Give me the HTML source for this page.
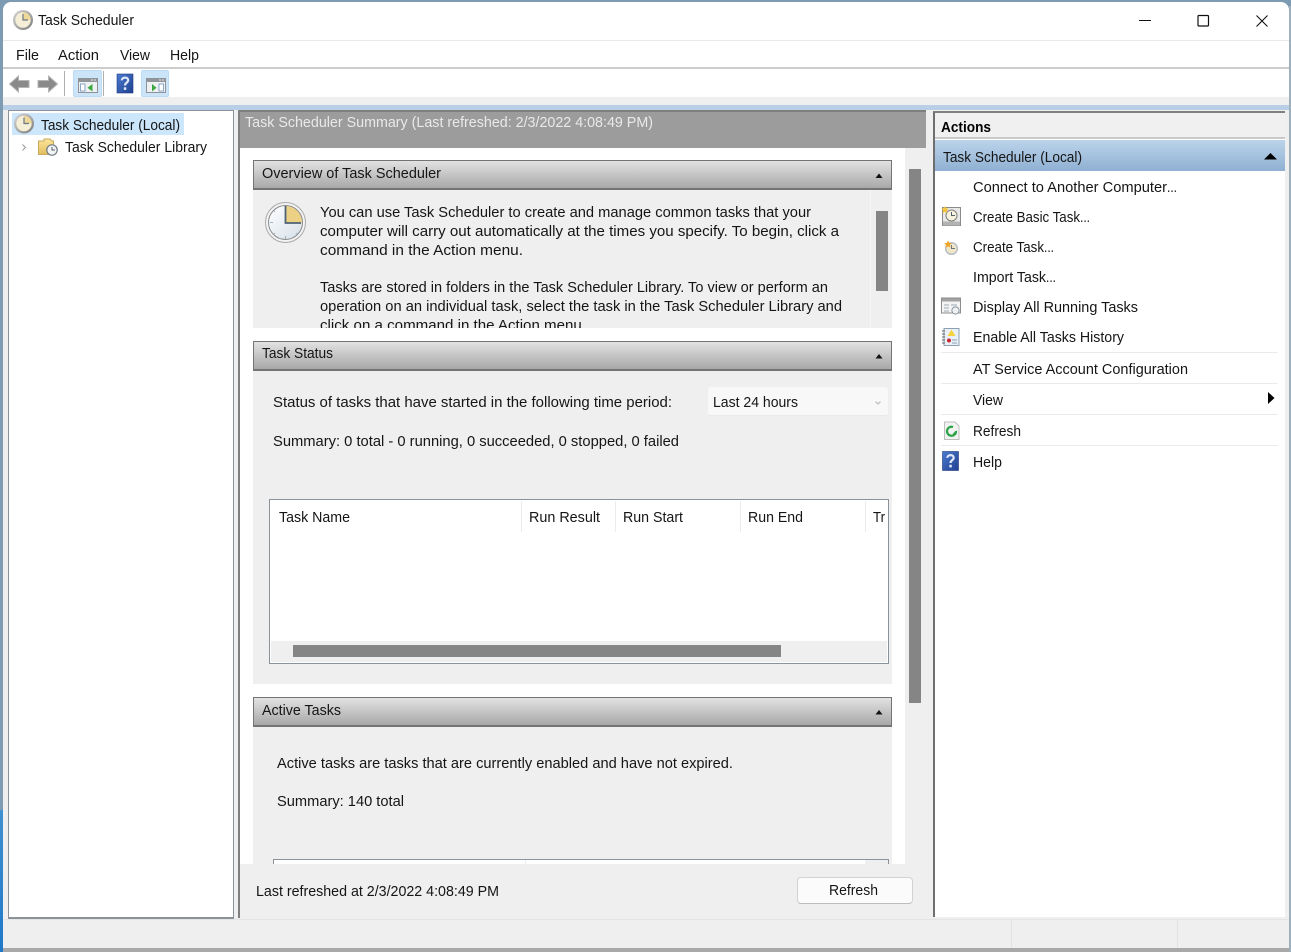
<!DOCTYPE html>
<html><head><meta charset="utf-8"><title>Task Scheduler</title>
<style>
html,body{margin:0;padding:0;width:1291px;height:952px;overflow:hidden;background:#7d9cb3}
body{filter:blur(.3px)}
.b{position:absolute;box-sizing:border-box}
.h{position:absolute;box-sizing:border-box;left:253px;width:639px;height:30px;border:2px solid #747474;border-width:1.5px 1.5px 2px 1.5px;background:linear-gradient(#e2e2e2,#a8a8a8)}
svg{position:absolute;left:0;top:0}
text{font-family:"Liberation Sans",sans-serif;font-size:15px;fill:#151515}
</style></head><body>
<div class="b" style="left:0;top:810px;width:8px;height:142px;background:linear-gradient(#3f90d0,#1f78c8)"></div>
<div class="b" style="left:3px;top:2px;width:1286px;height:946px;background:#fff;border-radius:8px 8px 0 0"></div>
<div class="b" style="left:3px;top:948px;width:1288px;height:4px;background:#a9a9a9"></div>
<div class="b" style="left:1289px;top:6px;width:2px;height:946px;background:#9fb0bd"></div>
<div class="b" style="left:3px;top:40px;width:1286px;height:1px;background:#e9e9e9"></div>
<div class="b" style="left:3px;top:67px;width:1286px;height:2px;background:#cdcdcd"></div>
<div class="b" style="left:3px;top:97px;width:1286px;height:8px;background:#efefef"></div>
<div class="b" style="left:3px;top:110px;width:1286px;height:810px;background:#efefef"></div>
<div class="b" style="left:3px;top:105px;width:1286px;height:5px;background:#b8cfe7"></div>
<div class="b" style="left:3px;top:920px;width:1286px;height:28px;background:#efefef"></div>
<div class="b" style="left:3px;top:919px;width:1286px;height:1px;background:#e4e4e4"></div>
<div class="b" style="left:1011px;top:920px;width:1px;height:28px;background:#e2e2e2"></div>
<div class="b" style="left:1177px;top:920px;width:1px;height:28px;background:#e2e2e2"></div>

<!-- toolbar toggles -->
<div class="b" style="left:73px;top:70px;width:29px;height:27px;background:#cce4f7;border:1px solid #bcdcf6;border-radius:2px"></div>
<div class="b" style="left:141px;top:70px;width:28px;height:27px;background:#cce4f7;border:1px solid #bcdcf6;border-radius:2px"></div>
<div class="b" style="left:64px;top:71px;width:1px;height:25px;background:#b0b0b0"></div>
<div class="b" style="left:103px;top:71px;width:1px;height:25px;background:#b0b0b0"></div>

<!-- tree -->
<div class="b" style="left:8px;top:110px;width:226px;height:809px;background:#fff;border:1px solid #8b929a;border-width:1px 1.5px 2px 1px"></div>
<div class="b" style="left:12px;top:113px;width:172px;height:22px;background:#cce6fb"></div>

<!-- center -->
<div class="b" style="left:238px;top:110px;width:689px;height:808px;background:#efefef;border-left:2px solid #7f7f7f"></div>
<div class="b" style="left:240px;top:110px;width:686px;height:38px;background:#9c9c9c;border-top:2px solid #7f7f7f"></div>
<div class="b" style="left:240px;top:148px;width:665px;height:716px;background:#fff"></div>
<div class="b" style="left:909px;top:169px;width:12px;height:534px;background:#858585"></div>

<div class="b" style="left:253px;top:190px;width:639px;height:138px;background:#efefef"></div>
<div class="b" style="left:870px;top:190px;width:1px;height:138px;background:#f6f6f6"></div>
<div class="b" style="left:876px;top:211px;width:12px;height:80px;background:#858585"></div>
<div class="h" style="top:160px"></div>

<div class="b" style="left:253px;top:370px;width:639px;height:314px;background:#efefef"></div>
<div class="h" style="top:341px"></div>
<div class="b" style="left:708px;top:387px;width:180px;height:29px;background:#f8f8f8;border-bottom:1px solid #e9e9e9;border-radius:3px"></div>
<div class="b" style="left:269px;top:499px;width:619.500px;height:164.500px;background:#fff;border:1px solid #8b9298;border-width:1px 1.5px 1.5px 1.5px"></div>
<div class="b" style="left:271px;top:641px;width:616px;height:21px;background:#efefef"></div>
<div class="b" style="left:293px;top:645px;width:488px;height:12px;background:#858585"></div>
<div class="b" style="left:521px;top:501px;width:1px;height:31px;background:#ececec"></div>
<div class="b" style="left:615px;top:501px;width:1px;height:31px;background:#ececec"></div>
<div class="b" style="left:740px;top:501px;width:1px;height:31px;background:#ececec"></div>
<div class="b" style="left:865px;top:501px;width:1px;height:31px;background:#ececec"></div>

<div class="b" style="left:253px;top:726px;width:639px;height:138px;background:#efefef"></div>
<div class="h" style="top:697px"></div>
<div class="b" style="left:273px;top:859px;width:615.500px;height:5px;background:#fff;border:1px solid #8b9298;border-width:1px 1px 0 1px"></div>
<div class="b" style="left:865px;top:860px;width:23px;height:4px;background:#efefef"></div>
<div class="b" style="left:525px;top:860px;width:1px;height:4px;background:#ececec"></div>
<div class="b" style="left:797px;top:877px;width:116px;height:27px;background:#fbfbfb;border:1px solid #d2d2d2;border-bottom-color:#bdbdbd;border-radius:4px"></div>

<!-- actions -->
<div class="b" style="left:933px;top:111px;width:352px;height:806px;background:#fff;border-left:2px solid #6f6f6f;border-top:2px solid #7f7f7f"></div>
<div class="b" style="left:935px;top:113px;width:350px;height:24px;background:#f0f0f0"></div>
<div class="b" style="left:935px;top:137px;width:350px;height:2px;background:#c9c9c9"></div>
<div class="b" style="left:935px;top:140px;width:350px;height:31px;background:linear-gradient(#bbd3ea,#8fb0d2)"></div>
<div class="b" style="left:941px;top:352px;width:337px;height:1px;background:#eaeaea"></div>
<div class="b" style="left:941px;top:383px;width:337px;height:1px;background:#eaeaea"></div>
<div class="b" style="left:941px;top:414px;width:337px;height:1px;background:#eaeaea"></div>
<div class="b" style="left:941px;top:445px;width:337px;height:1px;background:#eaeaea"></div>

<svg width="1291" height="952" viewBox="0 0 1291 952" xmlns="http://www.w3.org/2000/svg">
<defs>
<linearGradient id="gf" x1="0" y1="0" x2="1" y2="1"><stop offset="0" stop-color="#ffffff"/><stop offset="1" stop-color="#d5dfe8"/></linearGradient>
<linearGradient id="gr" x1="0" y1="0" x2="1" y2="1"><stop offset="0" stop-color="#d8d8d8"/><stop offset="1" stop-color="#7c7c7c"/></linearGradient>
<linearGradient id="gb" x1="0" y1="0" x2="1" y2="1"><stop offset="0" stop-color="#4b7bd0"/><stop offset="1" stop-color="#1f3f90"/></linearGradient>
<linearGradient id="gy" x1="0" y1="0" x2="0" y2="1"><stop offset="0" stop-color="#fbe79c"/><stop offset="1" stop-color="#e2bd5e"/></linearGradient>
<g id="clk">
<circle r="10" fill="url(#gr)"/><circle r="7.700" fill="#f5efd8"/>
<path d="M0 0V-7.700A7.700 7.700 0 0 1 7.700 0Z" fill="#eed89a"/>
<path d="M0 -6V0H5" fill="none" stroke="#6a7884" stroke-width="1.200"/>
</g>
<g id="win">
<rect x="0.500" y="0.500" width="19" height="14" fill="#eef0f2" stroke="#8d9398"/>
<rect x="1" y="1" width="18" height="3" fill="#8f959b"/>
<path d="M16 2h2M13 2h2" stroke="#e8e8e8"/>
</g>
<g id="help">
<rect width="16" height="19" fill="url(#gb)" stroke="#1e3a80" stroke-width=".6"/>
<path d="M4.800 6.300C5 2.700 11.200 2.700 11.200 6.300C11.200 8.600 8 8.700 8 11.500" fill="none" stroke="#dfe7f7" stroke-width="2.200"/>
<rect x="6.800" y="13.300" width="2.500" height="2.600" fill="#dfe7f7"/>
</g>
</defs>

<!-- title/tree clocks -->
<use href="#clk" x="23" y="20"/>
<use href="#clk" x="24" y="123.500"/>

<!-- window controls -->
<path d="M1139 20.500H1151" stroke="#111" stroke-width="1"/>
<rect x="1198" y="15.500" width="10.500" height="10.500" rx="1" fill="none" stroke="#111" stroke-width="1.200"/>
<path d="M1256.500 15.500L1267.500 26.500M1267.500 15.500L1256.500 26.500" stroke="#111" stroke-width="1.100"/>

<!-- toolbar -->
<path d="M9.500 84L18.500 76V80.500H29V87.500H18.500V92Z" fill="#8a8a8a" stroke="#b5b5b5"/>
<path d="M57.500 84L48.500 76V80.500H38V87.500H48.500V92Z" fill="#8a8a8a" stroke="#b5b5b5"/>
<g transform="translate(78 78)"><use href="#win"/>
<rect x="2.500" y="6" width="4.500" height="7" fill="#fff" stroke="#6f95bd" stroke-width=".8"/>
<path d="M14.500 6V13.500L9.500 9.800Z" fill="#3aa83f"/></g>
<use href="#help" x="117" y="74"/>
<g transform="translate(146 78)"><use href="#win"/>
<rect x="13" y="6" width="4.500" height="7" fill="#fff" stroke="#6f95bd" stroke-width=".8"/>
<path d="M6 6V13.500L10.500 9.800Z" fill="#3aa83f"/></g>

<!-- tree library -->
<path d="M22.500 144.500L25.500 147.500L22.500 150.500" fill="none" stroke="#9a9a9a"/>
<path d="M38.500 141H44V139H50L52 141H53.500V154.500H38.500Z" fill="url(#gy)" stroke="#c8a85a"/>
<circle cx="52" cy="150" r="5.200" fill="#f2f4f6" stroke="#6f7b85" stroke-width="1.200"/>
<path d="M52 147V150H55" fill="none" stroke="#55606a"/>

<!-- overview clock -->
<circle cx="285.500" cy="222.500" r="20" fill="#f4f4f4" stroke="#a9a9a9" stroke-width="1"/>
<circle cx="285.500" cy="222.500" r="17" fill="url(#gf)" stroke="#8a8a8a" stroke-width="1"/>
<path d="M285.500 222.500V206A16.500 16.500 0 0 1 302 222.500Z" fill="#ecd084"/>
<path d="M274 211l1 1M297 234l-1-1M274 234l1-1M285.500 236v3M270 222.500h3M280 239l.5-1M291 239l-.5-1" stroke="#9fb0bf" stroke-width="1"/>
<path d="M285.500 206V223H301" fill="none" stroke="#4d6274" stroke-width="1.800"/>

<!-- collapse triangles -->
<path d="M875.500 178L879 173.500L882.500 178Z" fill="#111"/>
<path d="M875.500 358.500L879 354L882.500 358.500Z" fill="#111"/>
<path d="M875.500 714.500L879 710L882.500 714.500Z" fill="#111"/>
<path d="M875.500 401.500L878 404L880.500 401.500" fill="none" stroke="#b5b5b5"/>

<!-- action triangles -->
<path d="M1264 159.500L1270.500 153L1277 159.500Z" fill="#000"/>
<path d="M1268 392L1274.500 398L1268 404Z" fill="#000"/>

<!-- action icons -->
<g>
<rect x="942.500" y="207.500" width="18" height="18" fill="#e9e9e9" stroke="#8a8a8a"/>
<rect x="943" y="221.500" width="17" height="4" fill="#b3b3b3"/>
<circle cx="951.500" cy="215.500" r="5.500" fill="#f8f3de" stroke="#7d7d7d"/>
<path d="M951.500 212V215.500H955" fill="none" stroke="#55606a"/>
<path d="M945 206l1.200 2.400 2.600.300-1.900 1.800.5 2.600-2.400-1.200-2.400 1.200.5-2.600-1.900-1.800 2.600-.300z" fill="#f4c33b"/>
</g>
<g>
<circle cx="951.500" cy="248.500" r="5.800" fill="#f1e7c8" stroke="#b5bec6" stroke-width="1.500"/>
<path d="M951.500 245V248.500H955" fill="none" stroke="#6a7884"/>
<path d="M948 240.500l1.200 2.400 2.600.300-1.900 1.800.5 2.600-2.400-1.200-2.400 1.200.5-2.600-1.900-1.800 2.600-.300z" fill="#eda52b"/>
</g>
<g>
<rect x="941.500" y="298" width="19" height="15" fill="#f4f4f4" stroke="#8d8d8d"/>
<rect x="942" y="298.500" width="18" height="3" fill="#a2a2a2"/>
<path d="M944 305h5M944 308h5M944 311h5M951 305h6" stroke="#9aa7b5"/>
<circle cx="955.500" cy="310.500" r="3.600" fill="#eef0f2" stroke="#8a959e"/>
</g>
<g>
<rect x="944" y="328.500" width="15" height="17" fill="#e9f0f8" stroke="#8ca0b5"/>
<path d="M942 331h3M942 334h3M942 337h3M942 340h3M942 343h3" stroke="#666"/>
<path d="M951.500 329.500L955.500 336H947.500Z" fill="#f5d33e"/>
<circle cx="949" cy="340.500" r="2" fill="#c8282f"/>
<path d="M952 340h5M952 343h5" stroke="#8ca0b5"/>
</g>
<g>
<path d="M944.500 422H955L959 426V439.500H944.500Z" fill="#f1f3f1" stroke="#bdbdbd"/>
<path d="M956 431A4.500 4.500 0 1 1 953 427" fill="none" stroke="#2aa248" stroke-width="2.200"/>
<path d="M952.500 433.500l4 1 .5-4z" fill="#2aa248"/>
</g>
<use href="#help" x="942.500" y="451.500"/>

<!-- text -->
<text x="38" y="25" textLength="96" lengthAdjust="spacingAndGlyphs">Task Scheduler</text>
<text x="16" y="60" textLength="23" lengthAdjust="spacingAndGlyphs">File</text>
<text x="58" y="60" textLength="41" lengthAdjust="spacingAndGlyphs">Action</text>
<text x="120" y="60" textLength="30" lengthAdjust="spacingAndGlyphs">View</text>
<text x="170" y="60" textLength="29" lengthAdjust="spacingAndGlyphs">Help</text>
<text x="41" y="130" textLength="139" lengthAdjust="spacingAndGlyphs">Task Scheduler (Local)</text>
<text x="65" y="152" textLength="142" lengthAdjust="spacingAndGlyphs">Task Scheduler Library</text>
<text x="245" y="127" textLength="408" lengthAdjust="spacingAndGlyphs" style="fill:#e9e9e9">Task Scheduler Summary (Last refreshed: 2/3/2022 4:08:49 PM)</text>
<text x="262" y="178" textLength="179" lengthAdjust="spacingAndGlyphs">Overview of Task Scheduler</text>
<text x="320" y="217" textLength="491" lengthAdjust="spacingAndGlyphs">You can use Task Scheduler to create and manage common tasks that your</text>
<text x="320" y="236" textLength="519" lengthAdjust="spacingAndGlyphs">computer will carry out automatically at the times you specify. To begin, click a</text>
<text x="320" y="255" textLength="203" lengthAdjust="spacingAndGlyphs">command in the Action menu.</text>
<text x="320" y="292" textLength="508" lengthAdjust="spacingAndGlyphs">Tasks are stored in folders in the Task Scheduler Library. To view or perform an</text>
<text x="320" y="311" textLength="522" lengthAdjust="spacingAndGlyphs">operation on an individual task, select the task in the Task Scheduler Library and</text>
<text x="320" y="330" textLength="266" lengthAdjust="spacingAndGlyphs">click on a command in the Action menu.</text>
<rect x="253" y="328" width="639" height="13" fill="#fff"/>
<text x="262" y="358" textLength="71" lengthAdjust="spacingAndGlyphs">Task Status</text>
<text x="273" y="407" textLength="399" lengthAdjust="spacingAndGlyphs">Status of tasks that have started in the following time period:</text>
<text x="713" y="407" textLength="85" lengthAdjust="spacingAndGlyphs">Last 24 hours</text>
<text x="273" y="446" textLength="406" lengthAdjust="spacingAndGlyphs">Summary: 0 total - 0 running, 0 succeeded, 0 stopped, 0 failed</text>
<text x="279" y="522" textLength="71" lengthAdjust="spacingAndGlyphs">Task Name</text>
<text x="529" y="522" textLength="71" lengthAdjust="spacingAndGlyphs">Run Result</text>
<text x="623" y="522" textLength="60" lengthAdjust="spacingAndGlyphs">Run Start</text>
<text x="748" y="522" textLength="55" lengthAdjust="spacingAndGlyphs">Run End</text>
<text x="873" y="522" textLength="12" lengthAdjust="spacingAndGlyphs">Tr</text>
<text x="262" y="715" textLength="79" lengthAdjust="spacingAndGlyphs">Active Tasks</text>
<text x="277" y="768" textLength="456" lengthAdjust="spacingAndGlyphs">Active tasks are tasks that are currently enabled and have not expired.</text>
<text x="277" y="806" textLength="127" lengthAdjust="spacingAndGlyphs">Summary: 140 total</text>
<text x="256" y="896" textLength="243" lengthAdjust="spacingAndGlyphs">Last refreshed at 2/3/2022 4:08:49 PM</text>
<text x="829" y="895" textLength="49" lengthAdjust="spacingAndGlyphs">Refresh</text>
<text x="941" y="132" textLength="50" lengthAdjust="spacingAndGlyphs" style="font-weight:bold;fill:#000">Actions</text>
<text x="943" y="162" textLength="139" lengthAdjust="spacingAndGlyphs">Task Scheduler (Local)</text>
<text x="973" y="192" textLength="194" lengthAdjust="spacingAndGlyphs">Connect to Another Computer</text><text x="1167" y="192" textLength="10" lengthAdjust="spacingAndGlyphs">...</text>
<text x="973" y="222" textLength="107" lengthAdjust="spacingAndGlyphs">Create Basic Task</text><text x="1080" y="222" textLength="10" lengthAdjust="spacingAndGlyphs">...</text>
<text x="973" y="252" textLength="71" lengthAdjust="spacingAndGlyphs">Create Task</text><text x="1044" y="252" textLength="10" lengthAdjust="spacingAndGlyphs">...</text>
<text x="973" y="282" textLength="73" lengthAdjust="spacingAndGlyphs">Import Task</text><text x="1046" y="282" textLength="10" lengthAdjust="spacingAndGlyphs">...</text>
<text x="973" y="312" textLength="165" lengthAdjust="spacingAndGlyphs">Display All Running Tasks</text>
<text x="973" y="342" textLength="151" lengthAdjust="spacingAndGlyphs">Enable All Tasks History</text>
<text x="973" y="374" textLength="215" lengthAdjust="spacingAndGlyphs">AT Service Account Configuration</text>
<text x="973" y="405" textLength="30" lengthAdjust="spacingAndGlyphs">View</text>
<text x="973" y="436" textLength="48" lengthAdjust="spacingAndGlyphs">Refresh</text>
<text x="973" y="467" textLength="29" lengthAdjust="spacingAndGlyphs">Help</text>
</svg>
</body></html>
